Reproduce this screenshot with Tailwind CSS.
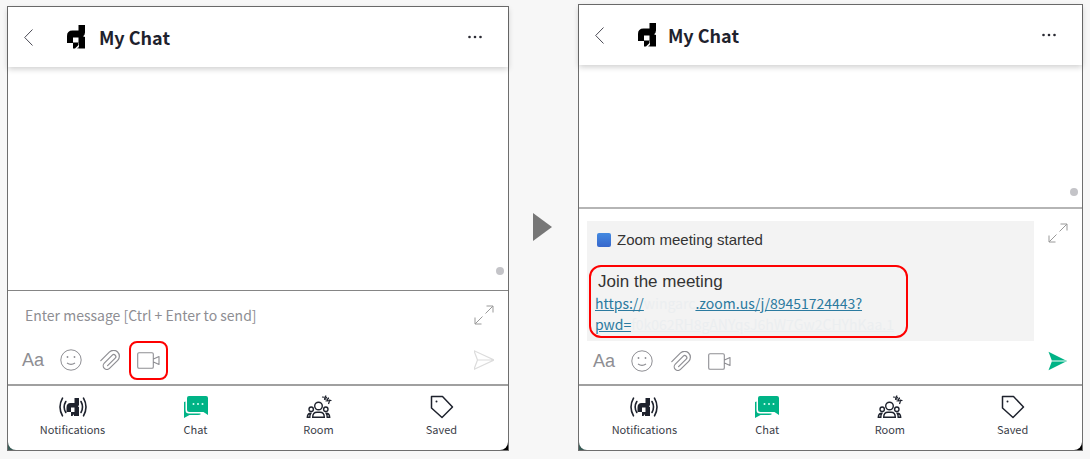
<!DOCTYPE html>
<html lang="en">
  <head>
    <meta charset="utf-8">
    <title>My Chat</title>
    <script src="https://cdn.jsdelivr.net/npm/@tailwindcss/browser@4"></script>
  </head>
  <body class="bg-[#f7f7f7] font-['Noto_Sans_CJK_JP',sans-serif] text-[#1e222d]">
    <!-- shared icons -->
    <svg class="hidden">
      <symbol id="back" viewBox="0 0 9 17"><path d="M8.500.5L.7 8.500l7.800 8" fill="none" stroke="#4b4b55"/></symbol>
      <symbol id="logo" viewBox="0 0 18 24"><path fill-rule="evenodd" d="M11.500 0H18v7.500q0 2.500-2 3.700L18 12v11.500h-6V18H0v-7q0-5.500 5.500-5.500h6zM6 12.500V18h5.500v-5.500z"/><path d="M6 17.500h5.500V20L8 23.500H6z"/><path d="M10 23.500l2-2v2z" fill="#444"/></symbol>
      <symbol id="dots" viewBox="0 0 14 4"><g fill="#2a2a33"><circle cx="1.500" cy="2" r="1.300"/><circle cx="7" cy="2" r="1.300"/><circle cx="12.500" cy="2" r="1.300"/></g></symbol>
      <symbol id="expand" viewBox="0 0 20 20"><path d="M12.500 1H19v6.500M19 1l-7.500 7.500M7.500 19H1v-6.500M1 19l7.500-7.500" fill="none" stroke="#999"/></symbol>
      <symbol id="smile" viewBox="0 0 22 22"><g fill="none" stroke="#8e8e93"><circle cx="11" cy="11" r="10.200"/><path d="M7 14q4 2.600 8 0" stroke-width="1.200"/></g><g fill="#8e8e93"><circle cx="7.500" cy="8" r=".9"/><circle cx="14.500" cy="8" r=".9"/></g></symbol>
      <symbol id="clip" viewBox="0 0 20 20"><path d="M.8 10.600L9.300 2.100a5.800 5.800 0 0 1 8.400 8.200L9.500 18.400a3.600 3.600 0 0 1-5.200-5.200l8-8a2 2 0 0 1 2.900 2.900l-7.600 7.600" fill="none" stroke="#8e8e93" stroke-width="1.200" stroke-linecap="round"/></symbol>
      <symbol id="video" viewBox="0 0 23 17"><path d="M2 .7h13q1.300 0 1.300 1.300v13q0 1.300-1.300 1.300H2Q.7 16.300.7 15V2Q.7.7 2 .7zM16.500 7l5.500-2.500v8L16.500 10" fill="none" stroke="#8e8e93" stroke-width="1.100" stroke-linejoin="round"/></symbol>
      <symbol id="bell" viewBox="0 0 28 20"><g fill="none" stroke="#1e222d" stroke-width="1.600" stroke-linecap="round"><path d="M3.500 1.200q-5 8.800 0 17.600M6.800 4.500q-3.300 5.500 0 11M24.500 1.200q5 8.800 0 17.600M22 4.500q3 5.500 0 11"/></g><path fill="#1e222d" fill-rule="evenodd" d="M15.500 1H20v7l-1 1.500 1 .5v9h-5v-4H7.500v-4.500q0-4.500 4-4.500h4zM12 10.500V15h3.500v-4.500z"/><path fill="#1e222d" d="M12 15h3.500v1.500L13.500 19H12z"/></symbol>
      <symbol id="bubbles" viewBox="0 0 24 22"><path fill="#00b386" d="M5 0h17q2 0 2 2v17l-4.500-3H5.500q-2.500 0-2.500-2.500V2q0-2 2-2z"/><path fill="#00b386" d="M0 6l1.500-.5V14q0 3.500 3.500 3.500h11L17 18q-1 1-3 1H5.500L0 22z"/><g fill="#d9fff3"><circle cx="9.500" cy="8" r="1"/><circle cx="14" cy="8" r="1"/><circle cx="18.500" cy="8" r="1"/></g></symbol>
      <symbol id="people" viewBox="0 0 26 24"><g fill="none" stroke="#1e222d" stroke-width="1.400"><circle cx="12.500" cy="11" r="3.800"/><circle cx="5.200" cy="14.200" r="2.200"/><circle cx="19.800" cy="14.200" r="2.200"/><path d="M6.700 22.300q0-5 4.300-5h3q4.300 0 4.300 5zM4.200 18.300q-2.800.7-2.900 4h2.500q0-2.700 1-4zM20.800 18.300q2.800.7 2.900 4h-2.500q0-2.700-1-4z"/><path d="M16 2l5 .5M20 .5l-1.500 4M18 4.500l5-1M22.500 2.500l-1.500 4M19.500 6l6-.5M24 4.500L22.500 9" stroke-width="1.200"/></g></symbol>
      <symbol id="tag" viewBox="0 0 24 24"><path d="M1.500 1.500h11L22.500 12 12 22.500 1.500 13z" fill="none" stroke="#1e222d" stroke-width="1.500" stroke-linejoin="round"/><circle cx="6.500" cy="6.500" r="1" fill="#1e222d"/></symbol>
    </svg>

    <main class="grid grid-cols-[502fr_69px_505fr] items-start px-[7px] pt-1">
      <!-- before -->
      <section class="mt-0.5 border border-[#6e6e6e] bg-linear-to-r from-[#3b5c57] to-black">
        <header class="relative flex h-[60px] items-center bg-white pr-[26px] pl-4 shadow-[0_2px_6px_rgba(0,0,0,0.2)]">
          <button aria-label="Back"><svg class="h-[17px] w-[9px]"><use href="#back"/></svg></button>
          <svg class="ml-[34px] h-6 w-[18px]"><use href="#logo"/></svg>
          <h1 class="ml-3.5 text-lg font-bold">My Chat</h1>
          <button class="ml-auto" aria-label="More"><svg class="h-1 w-3.5"><use href="#dots"/></svg></button>
        </header>
        <div class="flex h-[223px] items-end justify-end bg-white pr-1 pb-[15px]">
          <div class="size-2 rounded-full bg-[#c4c4c8]"></div>
        </div>
        <div class="flex flex-col gap-[13px] border-t border-[#858585] bg-white pt-3 pr-3.5 pb-1 pl-3.5">
          <div class="flex items-center">
            <input type="text" aria-label="Message" placeholder="Enter message [Ctrl + Enter to send]" class="h-6 min-w-0 flex-1 pl-[3px] text-sm outline-none placeholder:text-[#8e8e93]">
            <button aria-label="Expand"><svg class="size-5"><use href="#expand"/></svg></button>
          </div>
          <div class="flex h-10 items-center">
            <button class="w-[22px] font-['Liberation_Sans',sans-serif] text-lg text-[#8e8e93]" aria-label="Text format">Aa</button>
            <button class="ml-4" aria-label="Emoji"><svg class="size-[22px]"><use href="#smile"/></svg></button>
            <button class="ml-[18px]" aria-label="Attach"><svg class="size-5"><use href="#clip"/></svg></button>
            <button class="ml-[9px] flex size-[39px] items-center justify-center rounded-lg border-2 border-[#fe0000]" aria-label="Video meeting"><svg class="h-[17px] w-[23px]"><use href="#video"/></svg></button>
            <button class="ml-auto" aria-label="Send"><svg class="size-5" viewBox="0 0 20 20"><path d="M0 .7L20 10 0 19.300 3.500 10zM3.500 10H19" fill="none" stroke="#dcdcdc" stroke-width="1.200"/></svg></button>
          </div>
        </div>
        <nav class="grid h-[66px] grid-cols-4 rounded-b-lg border-t-2 border-[#a0a0a0] bg-white pt-[9px] pr-[5px] pl-[3px] text-[11px] leading-5 text-[#3a3d48]">
          <a href="#" class="flex flex-col items-center"><svg class="h-6 w-7"><use href="#bell"/></svg>Notifications</a>
          <a href="#" class="flex flex-col items-center"><svg class="h-6 w-6"><use href="#bubbles"/></svg>Chat</a>
          <a href="#" class="flex flex-col items-center"><svg class="h-6 w-[26px]"><use href="#people"/></svg>Room</a>
          <a href="#" class="flex flex-col items-center"><svg class="h-6 w-6"><use href="#tag"/></svg>Saved</a>
        </nav>
      </section>

      <svg class="mt-[209px] ml-6 h-7 w-[19px]" viewBox="0 0 19 28"><path d="M0 0l19 14L0 28z" fill="#777"/></svg>

      <!-- after -->
      <section class="border border-[#6e6e6e] bg-linear-to-r from-[#3b5c57] to-black">
        <header class="relative flex h-[60px] items-center bg-white pr-[26px] pl-4 shadow-[0_2px_6px_rgba(0,0,0,0.2)]">
          <button aria-label="Back"><svg class="h-[17px] w-[9px]"><use href="#back"/></svg></button>
          <svg class="ml-[34px] h-6 w-[18px]"><use href="#logo"/></svg>
          <h1 class="ml-3 text-lg font-bold">My Chat</h1>
          <button class="ml-auto" aria-label="More"><svg class="h-1 w-3.5"><use href="#dots"/></svg></button>
        </header>
        <div class="flex h-[142px] items-end justify-end bg-white pr-1 pb-[11px]">
          <div class="size-2 rounded-full bg-[#c4c4c8]"></div>
        </div>
        <div class="border-t-2 border-[#b5b5b5] bg-white pt-3 pr-3.5 pl-2">
          <div class="flex items-start">
            <div class="min-w-0 flex-1 bg-[#f3f3f3] pt-[7px] pb-[3px] pl-0.5 font-['Liberation_Sans',sans-serif] text-[#333]">
              <p class="flex h-6 items-center gap-1.5 pl-2 text-[15px]"><span class="size-3.5 rounded-[2px] bg-linear-to-b from-[#4389e0] to-[#3767cc]"></span>Zoom meeting started</p>
              <div class="mt-[13px] w-[319px] max-w-full rounded-xl border-2 border-[#fe0000] pt-1 pb-px pl-1">
                <p class="pl-[3px] text-[17px] leading-[22px]">Join the meeting</p>
                <a href="#" class="block font-['Noto_Sans_CJK_JP',sans-serif] text-sm leading-[21px] whitespace-nowrap text-[#2b7a9f]"><span class="underline">https://</span><span class="text-[#ebeef0]">wingarc</span><span class="underline">.zoom.us/j/89451724443?</span><br><span class="underline">pwd=</span><span class="text-[#ebeef0] underline">f0k062RH8gANYqsJ6hW7Gw2CHYhKaa.1</span></a>
              </div>
            </div>
            <button class="mt-0.5 ml-3.5" aria-label="Expand"><svg class="size-5"><use href="#expand"/></svg></button>
          </div>
          <div class="flex h-[43px] items-center pb-[3px] pl-1.5">
            <button class="w-[22px] font-['Liberation_Sans',sans-serif] text-lg text-[#8e8e93]" aria-label="Text format">Aa</button>
            <button class="ml-4" aria-label="Emoji"><svg class="size-[22px]"><use href="#smile"/></svg></button>
            <button class="ml-[18px]" aria-label="Attach"><svg class="size-5"><use href="#clip"/></svg></button>
            <button class="ml-[17px]" aria-label="Video meeting"><svg class="h-[17px] w-[23px]"><use href="#video"/></svg></button>
            <button class="ml-auto" aria-label="Send"><svg class="size-5" viewBox="0 0 20 20"><path d="M.5.7L19 10 .5 19.300 4 10z" fill="#00b386"/><path d="M4 10h14" stroke="#a5e5d3" stroke-width="1.500"/></svg></button>
          </div>
        </div>
        <nav class="grid h-[66px] grid-cols-4 rounded-b-lg border-t-2 border-[#a0a0a0] bg-white pt-[9px] pr-2 pl-1 text-[11px] leading-5 text-[#3a3d48]">
          <a href="#" class="flex flex-col items-center"><svg class="h-6 w-7"><use href="#bell"/></svg>Notifications</a>
          <a href="#" class="flex flex-col items-center"><svg class="h-6 w-6"><use href="#bubbles"/></svg>Chat</a>
          <a href="#" class="flex flex-col items-center"><svg class="h-6 w-[26px]"><use href="#people"/></svg>Room</a>
          <a href="#" class="flex flex-col items-center"><svg class="h-6 w-6"><use href="#tag"/></svg>Saved</a>
        </nav>
      </section>
    </main>
  </body>
</html>
